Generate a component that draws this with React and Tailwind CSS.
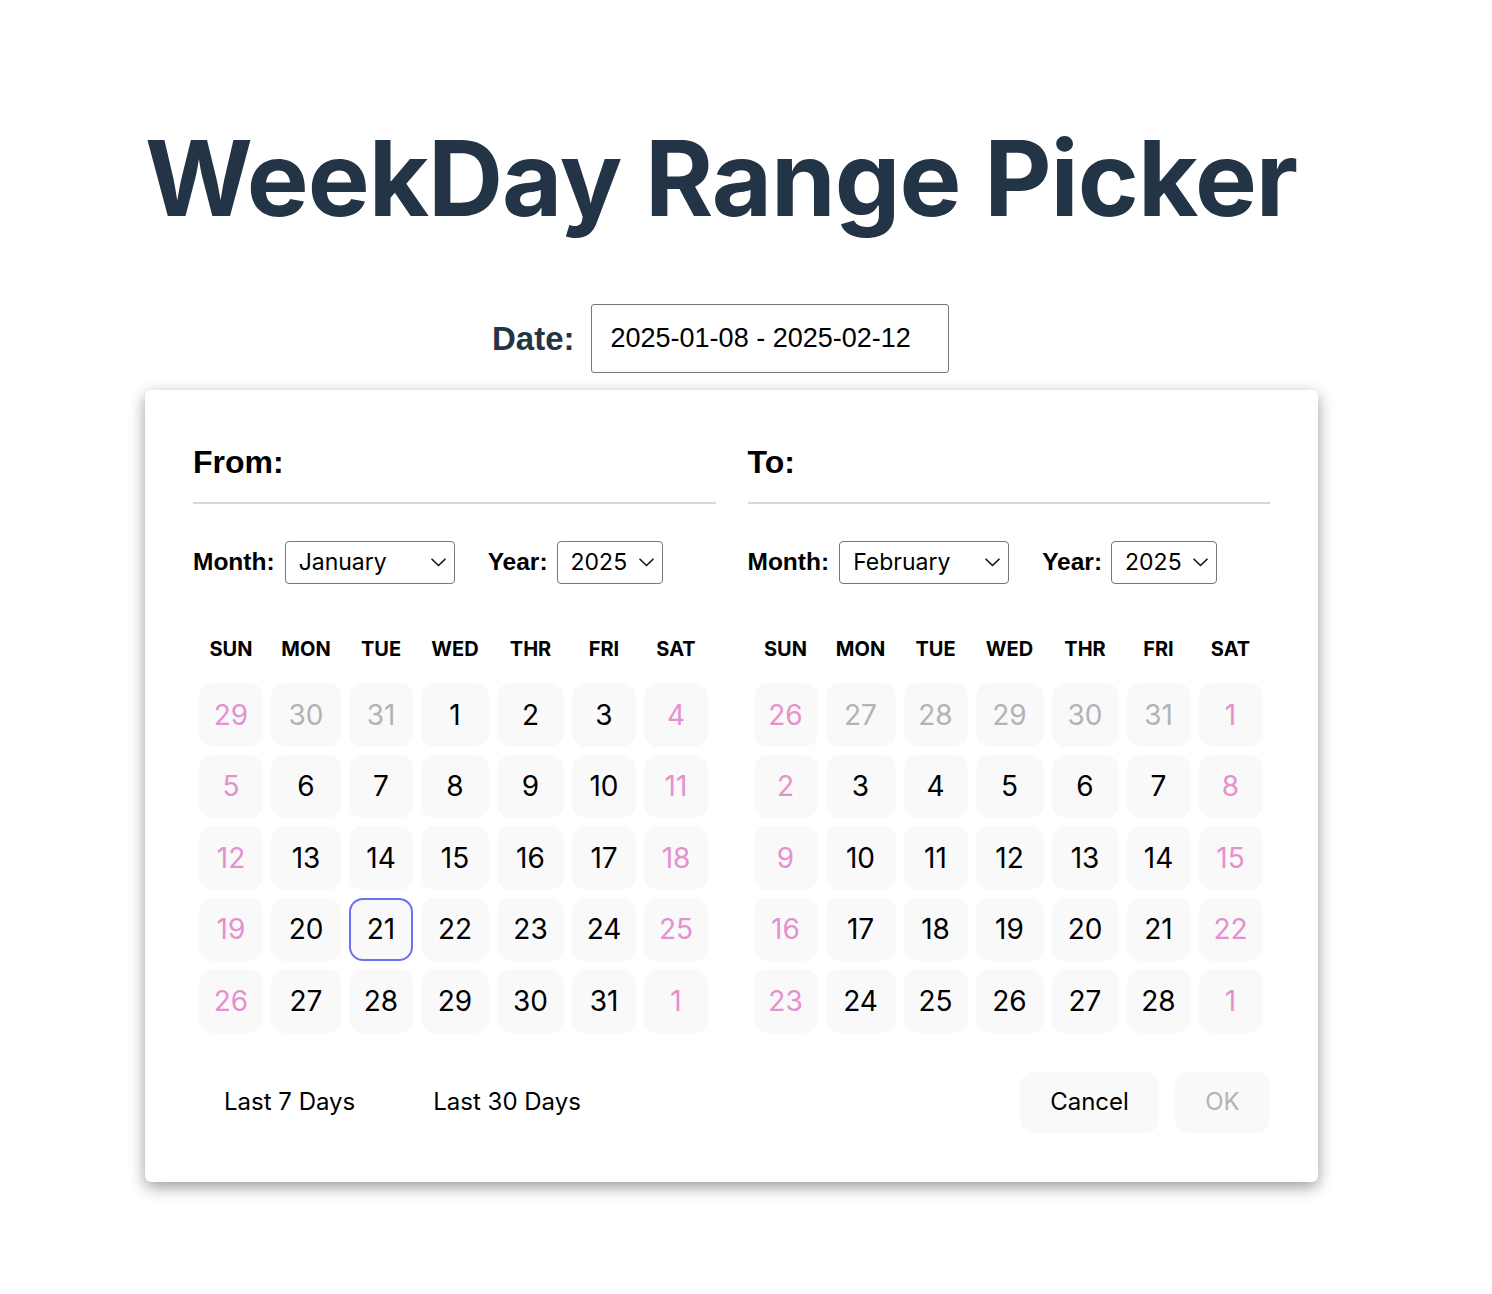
import React from "react";

const COLS = "grid grid-cols-[64px_70px_64px_68px_67px_64px_64px] gap-x-[8px]";
const HEAD = ["SUN", "MON", "TUE", "WED", "THR", "FRI", "SAT"];

const jan = [
  [29, "o"], [30, "o"], [31, "o"], [1, ""], [2, ""], [3, ""], [4, ""],
  [5, ""], [6, ""], [7, ""], [8, ""], [9, ""], [10, ""], [11, ""],
  [12, ""], [13, ""], [14, ""], [15, ""], [16, ""], [17, ""], [18, ""],
  [19, ""], [20, ""], [21, "sel"], [22, ""], [23, ""], [24, ""], [25, ""],
  [26, ""], [27, ""], [28, ""], [29, ""], [30, ""], [31, ""], [1, "o"],
];
const feb = [
  [26, "o"], [27, "o"], [28, "o"], [29, "o"], [30, "o"], [31, "o"], [1, ""],
  [2, ""], [3, ""], [4, ""], [5, ""], [6, ""], [7, ""], [8, ""],
  [9, ""], [10, ""], [11, ""], [12, ""], [13, ""], [14, ""], [15, ""],
  [16, ""], [17, ""], [18, ""], [19, ""], [20, ""], [21, ""], [22, ""],
  [23, ""], [24, ""], [25, ""], [26, ""], [27, ""], [28, ""], [1, "o"],
];

function Chevron() {
  return (
    <svg width="15" height="9" viewBox="0 0 15 9" fill="none">
      <path d="M1 1.2 L7.5 7.5 L14 1.2" stroke="#111" strokeWidth="1.6" strokeLinecap="round" strokeLinejoin="round" />
    </svg>
  );
}

function Select({ value, width }) {
  return (
    <div
      className={`flex h-[43px] items-center justify-between rounded-[4px] border-[1.5px] border-[#767676] bg-white pl-[13px] pr-[8px] ${width}`}
    >
      <span className="font-['Inter',sans-serif] text-[23px] leading-none text-black">{value}</span>
      <Chevron />
    </div>
  );
}

function Calendar({ label, month, days }) {
  return (
    <div className="flex flex-col">
      <div className="h-[40px] font-['Liberation_Sans',Arial,sans-serif] text-[32px] font-bold leading-[40px] text-black">
        {label}
      </div>
      <div className="mt-[20px] h-[2px] bg-[#d8d8d8]" />
      <div className="mt-[37px] flex items-center">
        <span className="font-['Liberation_Sans',Arial,sans-serif] text-[24.5px] font-bold text-black">Month:</span>
        <div className="ml-[10px]">
          <Select value={month} width="w-[170px]" />
        </div>
        <span className="ml-[33px] font-['Liberation_Sans',Arial,sans-serif] text-[24.5px] font-bold text-black">Year:</span>
        <div className="ml-[9px]">
          <Select value="2025" width="w-[106px]" />
        </div>
      </div>
      <div className={`${COLS} ml-[6px] mt-[50px] h-[30px] items-center`}>
        {HEAD.map((h) => (
          <div key={h} className="text-center font-['Inter',sans-serif] text-[20px] font-bold text-black">
            {h}
          </div>
        ))}
      </div>
      <div className={`${COLS} ml-[6px] mt-[19px] gap-y-[8px]`}>
        {days.map(([d, k], i) => {
          const col = i % 7;
          const weekend = col === 0 || col === 6;
          let color = "text-black";
          if (weekend) color = "text-[#e590cf]";
          else if (k === "o") color = "text-[#b3b3b3]";
          const border = k === "sel" ? "border-2 border-[#6b73f0]" : "";
          return (
            <div
              key={i}
              className={`flex h-[63.5px] items-center justify-center rounded-[14px] bg-[#f9f9f9] font-['Inter',sans-serif] text-[28px] ${color} ${border}`}
            >
              {d}
            </div>
          );
        })}
      </div>
    </div>
  );
}

export default function App() {
  return (
    <div className="min-h-screen bg-white pl-[145px] pt-[126px]">
      <h1 className="h-[104px] font-['Inter',sans-serif] text-[104px] font-bold leading-none tracking-[-1px] text-[#243447]">
        WeekDay Range Picker
      </h1>
      <div className="ml-[347px] mt-[74px] flex items-center">
        <span className="font-['Liberation_Sans',Arial,sans-serif] text-[33px] font-bold text-[#243447]">Date:</span>
        <div className="ml-[16px] flex h-[69px] w-[358px] items-center rounded-[3px] border-[1.5px] border-[#767676] pl-[19px]">
          <span className="font-['Liberation_Sans',Arial,sans-serif] text-[27px] text-black">2025-01-08 - 2025-02-12</span>
        </div>
      </div>
      <div className="mt-[17px] w-[1173px] rounded-[6px] bg-white px-[48px] pb-[49px] pt-[52px] shadow-[0_5px_16px_rgba(0,0,0,0.4)]">
        <div className="grid grid-cols-2 gap-x-[32px]">
          <Calendar label="From:" month="January" days={jan} />
          <Calendar label="To:" month="February" days={feb} />
        </div>
        <div className="mt-[39px] flex items-center justify-between">
          <div className="flex gap-[16px]">
            <button className="h-[61px] rounded-[14px] px-[31px] font-['Inter',sans-serif] text-[24px] text-black">Last 7 Days</button>
            <button className="h-[61px] rounded-[14px] px-[31px] font-['Inter',sans-serif] text-[24px] text-black">Last 30 Days</button>
          </div>
          <div className="flex gap-[16px]">
            <button className="h-[61px] w-[139px] rounded-[14px] bg-[#f9f9f9] font-['Inter',sans-serif] text-[24px] text-black">Cancel</button>
            <button className="h-[61px] w-[95px] rounded-[14px] bg-[#f9f9f9] font-['Inter',sans-serif] text-[24px] text-[#b3b3b3]">OK</button>
          </div>
        </div>
      </div>
    </div>
  );
}
